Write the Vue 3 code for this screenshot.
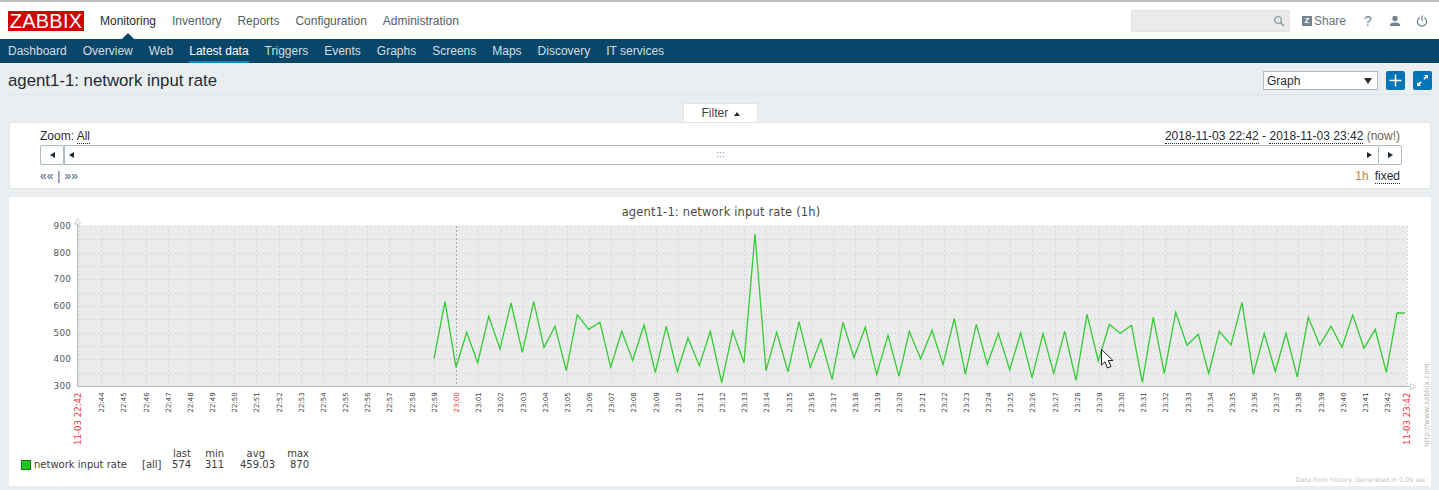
<script setup>
const main = ['Monitoring', 'Inventory', 'Reports', 'Configuration', 'Administration']
const sub = ['Dashboard', 'Overview', 'Web', 'Latest data', 'Triggers', 'Events', 'Graphs', 'Screens', 'Maps', 'Discovery', 'IT services']
const pts = [[434,358.3],[445,301.7],[456,367.3],[466.7,332.3],[477.7,362.7],[488.7,316.3],[500,349],[511,303],[522.3,352.3],[533.7,301.7],[544,347.3],[555,326.3],[566.3,370.7],[577.3,314.7],[588.7,329.3],[600,322.3],[610.7,367.3],[621.7,331.3],[632.7,360.3],[644,325],[655.3,372.3],[666.3,326.3],[677.3,371.7],[688,337.7],[699.3,365.7],[710.3,331.3],[721.7,382.7],[732.7,331.3],[744,362.7],[755,234],[766,370.7],[776.7,332.3],[788,371.7],[799,321.7],[810.3,367.3],[821,339.3],[832,379.3],[843,322.3],[854,357.7],[865.3,327.3],[876.7,374.3],[888,335.3],[899,376.3],[909.3,331.3],[920.7,358.7],[932,330.3],[943,364.7],[954.3,318.3],[965.3,374.3],[976.3,324.3],[987.3,364.3],[998.3,333.3],[1009.7,369.7],[1020.7,333],[1032,377.7],[1043,333.7],[1053.7,373.3],[1064.7,331.3],[1076,380.3],[1087,314.3],[1098.3,361],[1109.3,324.3],[1120.3,333.3],[1131.5,325.3],[1142.3,382.3],[1153.3,317.3],[1164.3,373.3],[1175.7,312.3],[1187,345.3],[1198.3,334.3],[1208.7,373.3],[1219.3,331.3],[1231,345],[1242,302.3],[1253.3,374.3],[1264.3,333.7],[1275.3,371.3],[1286,333.3],[1297.3,377],[1308.3,317.3],[1319.7,345],[1331,326.3],[1342,347.3],[1352.7,315],[1364,348.3],[1375.3,329.3],[1386.3,372.3],[1397,313],[1405,313]]
const line = pts.map(p => p.join(',')).join(' ')
const pad = n => String(n).padStart(2, '0')
const ticks = []
for (let k = -17; k <= 42; k++) {
  const total = 23 * 60 + k
  ticks.push({ x: Math.round(456 + k * 22.17) + 0.5, label: pad(Math.floor(total / 60)) + ':' + pad(total % 60), red: k === 0, major: k === 0 })
}
const hLines = []
for (let i = 1; i < 12; i++) hLines.push({ y: Math.round(226 + i * 13.333) + 0.5, main: i % 2 === 0 })
const yLabels = [900, 800, 700, 600, 500, 400, 300].map((v, i) => ({ v, y: 229 + i * 26.67 }))
</script>

<template>
  <div class="page">
    <header class="top">
      <div class="logo">ZABBIX</div>
      <nav class="main-nav">
        <a v-for="(m, i) in main" :key="m" :class="{ on: i === 0 }">{{ m }}</a>
      </nav>
      <div class="top-right">
        <div class="search">
          <svg width="12" height="12" viewBox="0 0 12 12"><circle cx="5" cy="5" r="3.4" fill="none" stroke="#8d9ba3" stroke-width="1.3"/><path d="M7.6 7.6 11 11" stroke="#8d9ba3" stroke-width="1.6"/></svg>
        </div>
        <div class="share"><span class="zbox">Z</span><span>Share</span></div>
        <span class="help">?</span>
        <svg class="ico-user" width="12" height="12" viewBox="0 0 12 12"><circle cx="6" cy="3.5" r="2.7" fill="#71858f"/><path d="M1 11V9.6C1 8 4 7.4 6 7.4S11 8 11 9.6V11Z" fill="#71858f"/></svg>
        <svg class="ico-power" width="12" height="12" viewBox="0 0 12 12"><path d="M3.6 2.6a4.6 4.6 0 1 0 4.8 0" fill="none" stroke="#71858f" stroke-width="1.2"/><path d="M6 .5V6" stroke="#71858f" stroke-width="1.2"/></svg>
      </div>
    </header>
    <nav class="sub-nav">
      <a v-for="s in sub" :key="s" :class="{ on: s === 'Latest data' }">{{ s }}</a>
    </nav>
    <div class="title-row">
      <h1>agent1-1: network input rate</h1>
      <div class="controls">
        <div class="select"><span>Graph</span><i class="sel-arrow"></i></div>
        <button class="blue"><svg width="13" height="13" viewBox="0 0 13 13"><path d="M6.5 .5v12M.5 6.5h12" stroke="#fff" stroke-width="1.6"/></svg></button>
        <button class="blue"><svg width="13" height="13" viewBox="0 0 13 13"><path d="M8 1h4v4L10.6 3.600 8.500 5.700 7.300 4.500 9.400 2.400ZM5 12H1V8L2.400 9.400 4.500 7.300 5.700 8.500 3.600 10.600Z" fill="#fff"/></svg></button>
      </div>
    </div>
    <div class="tab-row"><div class="tab">Filter <i class="up"></i></div></div>
    <section class="filter">
      <div class="f-line">
        <span>Zoom: <u>All</u></span>
        <span><u>2018-11-03 22:42</u> - <u>2018-11-03 23:42</u> <span class="now">(now!)</span></span>
      </div>
      <div class="scroll">
        <div class="s-btn"><i class="tri-l"></i></div>
        <div class="s-bar">
          <i class="tri-l"></i>
          <span class="grip">:::</span>
          <i class="tri-r"></i>
        </div>
        <div class="s-btn"><i class="tri-r"></i></div>
      </div>
      <div class="f-line low">
        <span class="nav-arrows">««<span class="sep">|</span>»»</span>
        <span><span class="orange">1h</span><u class="fixed">fixed</u></span>
      </div>
    </section>
    <section class="graph">
      <svg class="chart" width="1422" height="289" viewBox="9 197 1422 289">
        <text x="721" y="216" text-anchor="middle" class="g-title">agent1-1: network input rate (1h)</text>
        <rect x="78" y="226" width="1329" height="160" fill="#ebebeb"/>
        <line v-for="h in hLines" :key="h.y" x1="78" x2="1407" :y1="h.y" :y2="h.y" :stroke="h.main ? '#cfd8dd' : '#d6d9db'" stroke-width="1" stroke-dasharray="2 2"/>
        <line x1="78" x2="1407" y1="226" y2="226" stroke="#d6d9db" stroke-dasharray="2 2"/>
        <line v-for="t in ticks" :key="t.label" :x1="t.x" :x2="t.x" y1="226" y2="386" :stroke="t.major ? '#9dabb5' : '#d3dade'" stroke-dasharray="2 2"/>
        <line x1="1407.5" x2="1407.5" y1="226" y2="386" stroke="#d6d9db" stroke-dasharray="2 2"/>
        <path d="M77.5 222V386.5H1411" fill="none" stroke="#acbbc2"/>
        <path d="M77.5 218.500 80.500 224H74.500Z" fill="#fff" stroke="#c5d0d5"/>
        <path d="M1416 386.500 1410.500 383.500V389.500Z" fill="#fff" stroke="#c5d0d5"/>
        <text v-for="l in yLabels" :key="l.v" x="71" :y="l.y" text-anchor="end" class="y-lab">{{ l.v }}</text>
        <g v-for="t in ticks.slice(1)" :key="'l' + t.label">
          <text :transform="`translate(${t.x + 2} 412.500) rotate(-90)`" :class="t.red ? 'x-lab red' : 'x-lab'">{{ t.label }}</text>
        </g>
        <text transform="translate(80.500 445) rotate(-90)" class="x-big">11-03 22:42</text>
        <text transform="translate(1409.500 445) rotate(-90)" class="x-big">11-03 23:42</text>
        <polyline :points="line" fill="none" stroke="#33cc33" stroke-width="1.300" stroke-linejoin="miter"/>
        <path d="M1101.500 349.500V365L1105 361.800 1107.500 368 1111 366.500 1108.300 360.500H1113Z" fill="#fff" stroke="#1c2126" stroke-width="1"/>
        <text transform="translate(1429 447) rotate(-90)" class="url">http://www.zabbix.com</text>
        <rect x="21.500" y="460.500" width="9" height="9" fill="#1ec81e" stroke="#0f7a0f"/>
        <text x="34" y="468" class="leg">network input rate</text>
        <text x="142" y="468" class="leg">[all]</text>
        <text x="191" y="457" text-anchor="end" class="leg">last</text>
        <text x="224" y="457" text-anchor="end" class="leg">min</text>
        <text x="265" y="457" text-anchor="end" class="leg">avg</text>
        <text x="309" y="457" text-anchor="end" class="leg">max</text>
        <text x="191" y="468" text-anchor="end" class="leg">574</text>
        <text x="224" y="468" text-anchor="end" class="leg">311</text>
        <text x="275" y="468" text-anchor="end" class="leg">459.03</text>
        <text x="309" y="468" text-anchor="end" class="leg">870</text>
        <text x="1428" y="482" text-anchor="end" class="foot">Data from history. Generated in 0.09 sec.</text>
      </svg>
    </section>
  </div>
</template>

<style scoped>
.page { width: 1439px; height: 490px; overflow: hidden; background: #ebeef0; font: 12px/14px "Liberation Sans", Arial, sans-serif; color: #1f2c33; }
.top { height: 37px; border-top: 2px solid #bcbcbc; background: #fff; display: flex; align-items: flex-start; padding-left: 8px; position: relative; }
.logo { width: 76px; height: 20px; margin-top: 9px; background: #d40000; color: #fff; font-size: 20px; line-height: 20px; text-align: center; letter-spacing: .25px; }
.main-nav { display: flex; margin-left: 8px; margin-top: 12px; }
.main-nav a { padding: 0 8px; color: #4f5f68; line-height: 14px; position: relative; }
.main-nav a.on { color: #1f2c33; }
.main-nav a.on::after { content: ""; position: absolute; left: 50%; margin-left: -6px; bottom: -11px; border: 6px solid transparent; border-top: 0; border-bottom-color: #0a466a; }
.top-right { margin-left: auto; display: flex; align-items: center; height: 22px; margin-top: 8px; }
.search { width: 159px; height: 22px; box-sizing: border-box; background: #ebebeb; border: 1px solid #e4e4e4; display: flex; align-items: center; justify-content: flex-end; padding-right: 4px; margin-right: 12px; }
.share { display: flex; align-items: center; gap: 2px; color: #66757e; width: 44px; }
.zbox { width: 10px; height: 10px; background: #71858f; color: #fff; font-size: 8px; line-height: 10px; text-align: center; font-weight: 700; }
.help { margin-left: 18px; color: #71858f; width: 7px; font-size: 14px; }
.ico-user { margin-left: 18px; }
.ico-power { margin-left: 15px; margin-right: 11px; }
.sub-nav { height: 24px; background: #0a466a; display: flex; padding-left: 8px; gap: 16px; }
.sub-nav a { color: #d5dde2; line-height: 24px; height: 24px; box-sizing: border-box; }
.sub-nav a.on { color: #fff; border-bottom: 2px solid #0689d2; }
.title-row { height: 31px; margin: 0 7px 0 8px; display: flex; justify-content: space-between; align-items: center; border-bottom: 1px solid #dfe4e7; }
h1 { margin: 4px 0 0; font-size: 16.800px; font-weight: 400; color: #1f2c33; line-height: 20px; }
.controls { display: flex; align-items: center; margin-top: 4px; }
.select { width: 115px; height: 19px; box-sizing: border-box; background: #fff; border: 1px solid #acbbc2; display: flex; align-items: center; justify-content: space-between; padding: 0 4px 0 3px; margin-right: 8px; color: #1f2c33; }
.sel-arrow { width: 0; height: 0; border: 4px solid transparent; border-top: 6px solid #1f2c33; border-bottom: 0; margin-right: 1px; }
button.blue { width: 19px; height: 19px; border: 0; padding: 0; border-radius: 2px; background: #0275b8; display: flex; align-items: center; justify-content: center; margin-right: 8px; }
button.blue:last-child { margin-right: 0; }
.tab-row { height: 27px; display: flex; align-items: flex-end; justify-content: center; padding-left: 2px; box-sizing: border-box; width: 1439px; }
.tab { width: 75px; height: 19px; box-sizing: border-box; background: #fff; border: 1px solid #dfe4e7; border-bottom: 0; text-align: center; line-height: 18px; color: #3a4850; }
.up { display: inline-block; width: 0; height: 0; border: 3.500px solid transparent; border-top: 0; border-bottom: 4px solid #1f2c33; margin-left: 2px; vertical-align: 1px; }
.filter { margin-left: 9px; width: 1422px; height: 67px; box-sizing: border-box; background: #fff; border: 1px solid #dfe4e7; padding: 6px 30px 0 30px; }
.f-line { display: flex; justify-content: space-between; line-height: 14px; height: 16px; color: #1f2c33; }
.f-line u { text-decoration: none; border-bottom: 1px dotted #1f2c33; }
.orange { color: #c9802f; }
.now { color: #6f6252; }
.fixed { margin-left: 6px; }
.scroll { display: flex; height: 20px; margin-right: -2px; }
.s-btn { width: 24px; box-sizing: border-box; border: 1px solid #acbbc2; display: flex; align-items: center; justify-content: center; background: #fff; flex: none; border-radius: 2px; }
.s-bar { flex: 1; box-sizing: border-box; border: 1px solid #acbbc2; border-right: 0; display: flex; align-items: center; justify-content: space-between; padding: 0 6px 0 4px; }
.grip { font: 8px/10px "DejaVu Sans", sans-serif; color: #71858f; letter-spacing: .2px; }
.tri-l { width: 0; height: 0; border: 3.500px solid transparent; border-left: 0; border-right: 5px solid #1f2c33; }
.tri-r { width: 0; height: 0; border: 3.500px solid transparent; border-right: 0; border-left: 5px solid #1f2c33; }
.low { margin-top: 4px; }
.nav-arrows { color: #4a5f80; }
.sep { color: #5a4aa0; padding: 0 4px; }
.graph { margin: 8px 0 0 9px; width: 1422px; height: 289px; background: #fff; }
.chart { display: block; }
.chart text { font-family: "DejaVu Sans", sans-serif; }
.g-title { font-size: 11.500px; fill: #4a4a4a; letter-spacing: .15px; }
.y-lab { font-size: 8.800px; fill: #555; letter-spacing: .2px; }
.x-lab { font-size: 7px; fill: #444; }
.x-lab.red { fill: #ee3333; }
.x-big { font-size: 8.600px; fill: #ee3333; }
.url { font-size: 7.300px; fill: #b4b4b4; }
.leg { font-size: 10px; fill: #3c3c3c; }
.foot { font-size: 6.400px; fill: #c4c4c4; }
</style>
